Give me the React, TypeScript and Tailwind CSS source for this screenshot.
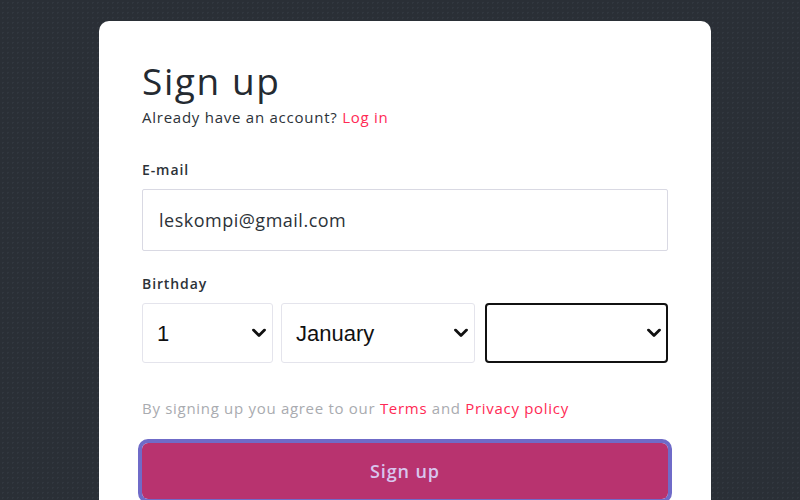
import React from 'react';

const font = { fontFamily: '"Open Sans", Lato, sans-serif' };

function Chevron() {
  return (
    <svg
      className="pointer-events-none absolute right-[7px] top-1/2 -translate-y-1/2"
      width="14"
      height="9"
      viewBox="0 0 14 9"
      fill="none"
    >
      <path d="M1.5 1.5 L7 7 L12.5 1.5" stroke="#111" strokeWidth="2.8" strokeLinecap="round" strokeLinejoin="round" />
    </svg>
  );
}

interface SelectBoxProps {
  value: string;
  options: string[];
  width: string;
  focused?: boolean;
}

function SelectBox({ value, options, width, focused = false }: SelectBoxProps) {
  return (
    <div className={`relative ${width}`}>
      <select
        defaultValue={value}
        className={
          focused
            ? 'h-[60px] w-full appearance-none rounded-[4px] border-2 border-[#111] bg-white pl-[14px] text-[22px] text-[#111] outline-none font-["Liberation_Sans",Arial,sans-serif]'
            : 'h-[60px] w-full appearance-none rounded-[3px] border border-[#e4e4ec] bg-white pl-[14px] text-[22px] text-[#111] outline-none font-["Liberation_Sans",Arial,sans-serif]'
        }
      >
        {options.map((o) => (
          <option key={o} value={o}>
            {o}
          </option>
        ))}
      </select>
      <Chevron />
    </div>
  );
}

const months = [
  'January', 'February', 'March', 'April', 'May', 'June',
  'July', 'August', 'September', 'October', 'November', 'December',
];

export default function App() {
  return (
    <div className="h-[500px] overflow-hidden bg-[#2a2f36] bg-[radial-gradient(#31373f_1px,transparent_1px)] bg-[length:5px_5px] pl-[99px] pt-[21px]">
      <div className="h-[560px] w-[612px] rounded-[10px] bg-white px-[43px] pt-[35px]" style={font}>
        <h1 className="text-[37px] leading-[50px] tracking-[1.6px] text-[#242a31]">Sign up</h1>
        <p className="mt-[1px] text-[15px] leading-[20px] tracking-[0.75px] text-[#2c3238]">
          Already have an account? <a href="#" className="text-[#ff2a55]">Log in</a>
        </p>

        <form className="mt-[33px]" onSubmit={(e) => e.preventDefault()}>
          <label htmlFor="email" className="block text-[14px] font-semibold leading-[20px] tracking-[0.9px] text-[#2c3238]">
            E-mail
          </label>
          <input
            id="email"
            type="email"
            defaultValue="leskompi@gmail.com"
            className="mt-[9px] block h-[62px] w-full rounded-[2px] border border-[#d9d9e3] px-4 text-[18px] tracking-[0.5px] text-[#2c3238] outline-none"
          />

          <label className="mt-[23px] block text-[14px] font-semibold leading-[20px] tracking-[0.9px] text-[#2c3238]">
            Birthday
          </label>
          <div className="mt-[9px] flex">
            <SelectBox value="1" options={Array.from({ length: 31 }, (_, i) => String(i + 1))} width="w-[131px]" />
            <div className="ml-[8px]">
              <SelectBox value="January" options={months} width="w-[194px]" />
            </div>
            <div className="ml-[10px]">
              <SelectBox value="" options={['']} width="w-[183px]" focused />
            </div>
          </div>

          <p className="mt-[35px] text-[15px] leading-[20px] tracking-[0.7px] text-[#a9abb0]">
            By signing up you agree to our <a href="#" className="text-[#ff2a55]">Terms</a> and{' '}
            <a href="#" className="text-[#ff2a55]">Privacy policy</a>
          </p>

          <button
            type="submit"
            className="mt-[25px] h-[56px] w-full rounded-[6px] bg-[#b8336f] text-[18px] font-semibold tracking-[0.9px] text-[#d8c6ee] outline-4 outline-[#6f6bc8]"
          >
            Sign up
          </button>
        </form>
      </div>
    </div>
  );
}
